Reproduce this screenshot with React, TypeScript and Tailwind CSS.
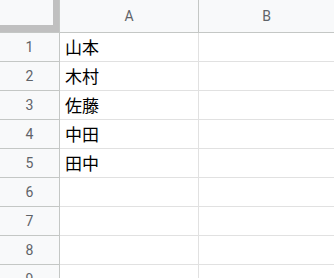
const rows = ["山本", "木村", "佐藤", "中田", "田中", "", "", "", ""];

export default function App() {
  return (
    <div
      className="h-[278px] w-[334px] overflow-hidden bg-white"
      style={{ fontFamily: "Roboto, 'Noto Sans CJK JP', sans-serif" }}
    >
      <div className="flex h-[33px] border-b border-[#c4c7c5] bg-[#f8f9fa] text-[14px] text-[#5f6368]">
        <div className="w-[60px] shrink-0 border-r border-[#c4c7c5]">
          <div className="h-[32px] w-[59px] border-r-[6px] border-b-[7px] border-[#c0c0c0]" />
        </div>
        <div className="flex w-[139px] shrink-0 items-center justify-center border-r border-[#c4c7c5]">A</div>
        <div className="flex flex-1 items-center justify-center">B</div>
      </div>
      {rows.map((name, i) => (
        <div key={i} className="flex h-[29px] shrink-0">
          <div className="flex w-[60px] shrink-0 items-center justify-center border-r border-b border-[#c4c7c5] bg-[#f8f9fa] text-[14px] text-[#5f6368]">
            {i + 1}
          </div>
          <div
            className="flex w-[139px] shrink-0 items-center border-r border-b border-[#e1e1e1] pl-[5px] text-[17px] text-black"
            style={{ fontFamily: "'Noto Sans CJK JP', sans-serif" }}
          >
            {name}
          </div>
          <div className="flex-1 border-b border-[#e1e1e1]" />
        </div>
      ))}
    </div>
  );
}
